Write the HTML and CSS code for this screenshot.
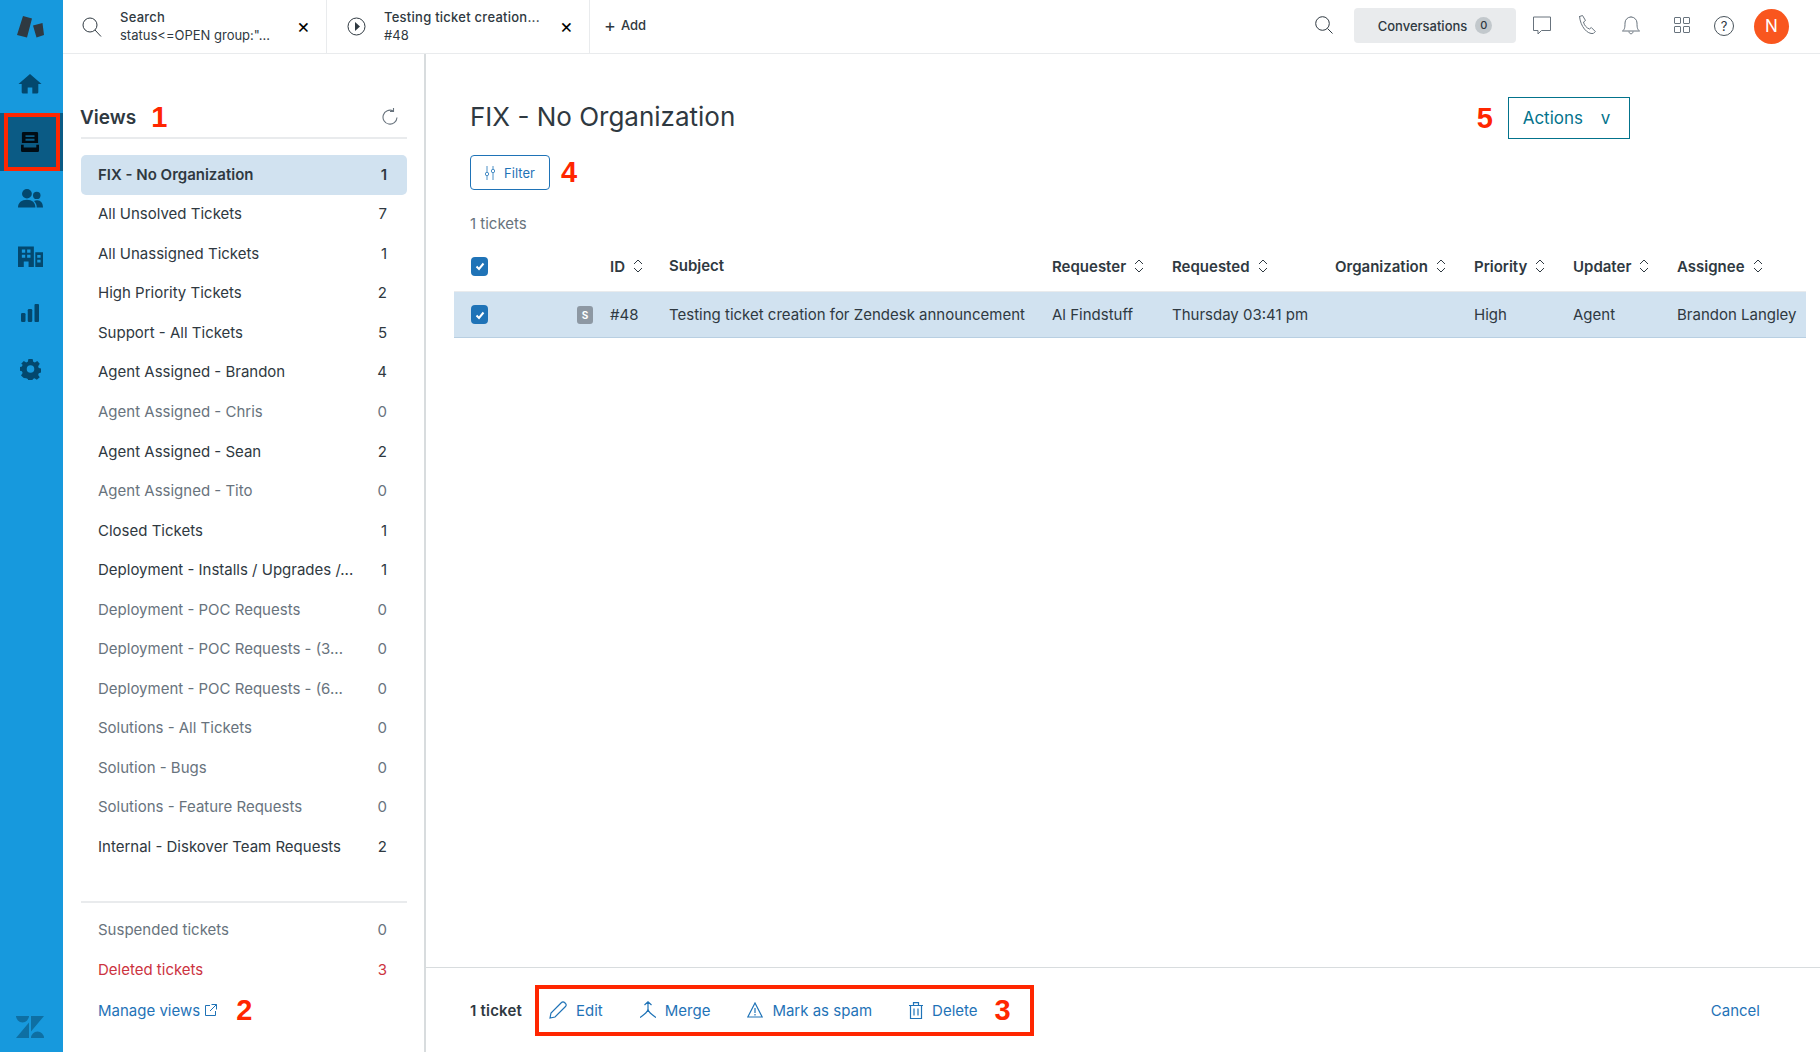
FILE: index.html
```html
<!DOCTYPE html>
<html lang="en">
<head>
    <meta charset="UTF-8">
    <title>FIX - No Organization</title>
    <link rel="stylesheet" href="styles.css">
</head>
<body>
    <div class="app">
        <nav class="rail">
            <svg class="rail-logo" width="28" height="24" viewBox="0 0 28 24"><path d="M7 1l9 2.500-5 19-10-2.500zM17 10.500l9.500-2.500 1.500 12-7.500 2.500z" fill="#2f3941"/></svg>
            <a class="rail-item"><svg width="24" height="21" viewBox="0 0 26 24" preserveAspectRatio="none"><path d="M13 1L0.500 12.500h3.500V22a1.500 1.500 0 0 0 1.500 1.500h5v-7h5v7h5a1.500 1.500 0 0 0 1.500-1.500V12.500h3.500z"/></svg></a>
            <a class="rail-item active"><svg width="18" height="20" viewBox="0 0 20 22" preserveAspectRatio="none"><path d="M1 1.500A1.500 1.500 0 0 1 2.500 0h15A1.500 1.500 0 0 1 19 1.500V12H1zM0 14h3v3h14v-3h3v6.500a1.500 1.500 0 0 1-1.500 1.500h-17A1.500 1.500 0 0 1 0 20.500z" fill="#000c14"/><path d="M5 4.500h10M5 8.500h10" stroke="#0b5b85" stroke-width="2"/></svg></a>
            <a class="rail-item"><svg width="25" height="19" viewBox="0 0 28 22" preserveAspectRatio="none"><circle cx="10" cy="5.500" r="5.500"/><circle cx="21" cy="7.500" r="4.200"/><path d="M0 21.500c0-5.500 4-9 10-9s9.500 3.500 9.500 9zM21 21.500c0-3-1-5.500-3-7.500 1-.7 2-1 3.500-1 4 0 6.500 3.500 6.500 8.500z"/></svg></a>
            <a class="rail-item"><svg width="25" height="22" viewBox="0 0 26 24" preserveAspectRatio="none"><path fill-rule="evenodd" d="M0 1.500h16.500V24H11v-6H6v6H0zM4 5v3.500h3.500V5zM9.500 5v3.500H13V5zM4 10.500V14h3.500v-3.500zM9.500 10.500V14H13v-3.500zM18 8h8v16h-8zM20 11v3h3.500v-3zM20 16v3h3.500v-3z"/></svg></a>
            <a class="rail-item"><svg width="18" height="18" viewBox="0 0 20 20"><rect x="0" y="10" width="5" height="10" rx="1.500"/><rect x="7.500" y="5.500" width="5" height="14.500" rx="1.500"/><rect x="15" y="0" width="5" height="20" rx="1"/></svg></a>
            <a class="rail-item"><svg width="21" height="21" viewBox="0 0 24 24"><path fill-rule="evenodd" d="M9.500 0h5l.7 3.300 2 .9L20 2.300l3 3.500-1.900 2.700.7 2.200 3.200.9v4.400l-3.200.9-.7 2.100 1.900 2.700-3.500 3-2.700-1.800-2 .8-.7 3.200h-4.600l-.7-3.200-2-.8L4 22.600l-3.300-3L2.600 16.800l-.8-2.100-3-.9v-4l3-.9.8-2.200L.9 5.800 4 2.500l2.800 1.700 2-.9zM12 7.500a4.500 4.500 0 1 0 0 9 4.500 4.500 0 0 0 0-9z" transform="translate(0.500 0) scale(.96)"/></svg></a>
            <svg class="rail-brand" width="28" height="22" viewBox="0 0 28 22"><path d="M13 6.500V22H0zM13 0A6.500 6.500 0 0 1 0 0zM15 0H28L15 15.500zM15 22a6.500 6.500 0 0 1 13 0z" fill="#0e6fa3"/></svg>
        </nav>

        <div class="workspace">
            <header class="topbar">
                <div class="tab tab-search">
                    <svg class="tab-icon" width="20" height="20" viewBox="0 0 20 20" fill="none" stroke="#2f3941" stroke-width="1"><circle cx="8" cy="8" r="7"/><path d="M13 13l6 6.500"/></svg>
                    <div class="tab-text">
                        <div class="tab-title">Search</div>
                        <div class="tab-sub">status&lt;=OPEN group:"...</div>
                    </div>
                    <span class="tab-close">×</span>
                </div>
                <div class="tab tab-ticket">
                    <svg class="tab-icon" width="19" height="19" viewBox="0 0 19 19"><circle cx="9.500" cy="9.500" r="8.500" fill="none" stroke="#2f3941" stroke-width="1"/><path d="M8 5l5 4.500-5 4.500z" fill="#2f3941"/></svg>
                    <div class="tab-text">
                        <div class="tab-title">Testing ticket creation...</div>
                        <div class="tab-sub">#48</div>
                    </div>
                    <span class="tab-close">×</span>
                </div>
                <div class="tab-add"><span class="plus">+</span> Add</div>

                <div class="topbar-right">
                    <svg class="search-top" width="18" height="18" viewBox="0 0 18 18" fill="none" stroke="#2f3941" stroke-width="1"><circle cx="7.500" cy="7.500" r="6.800"/><path d="M12.500 12.500l5 5"/></svg>
                    <div class="conv">Conversations <span class="conv-count">0</span></div>
                    <svg class="ti ti-chat" width="18" height="19" viewBox="0 0 18 19" fill="none" stroke="#68737d" stroke-width="1"><path d="M.5 1h17v13.500H8.500L5 18v-3.500H.5z"/></svg>
                    <svg class="ti ti-phone" width="18" height="20" viewBox="0 0 18 20" fill="none" stroke="#68737d" stroke-width="1"><path d="M1.500 1.500l3-1 3 5-2 1.500c.5 3 3 6 6 7l1.800-1.500 4 4-2 2c-6 1-13-7-13.800-17.500z"/></svg>
                    <svg class="ti ti-bell" width="18" height="19" viewBox="0 0 18 19" fill="none" stroke="#68737d" stroke-width="1"><path d="M.5 15c2-1.500 2.500-3 2.500-8a6 6 0 0 1 12 0c0 5 .5 6.500 2.500 8zM7 15.500c0 3 4 3 4 0M9 1V.5"/></svg>
                    <svg class="ti ti-grid" width="16" height="16" viewBox="0 0 16 16" fill="none" stroke="#68737d" stroke-width="1"><rect x=".5" y=".5" width="6" height="6" rx=".5"/><rect x="9.500" y=".5" width="6" height="6" rx=".5"/><rect x=".5" y="9.500" width="6" height="6" rx=".5"/><rect x="9.500" y="9.500" width="6" height="6" rx=".5"/></svg>
                    <div class="help">?</div>
                    <div class="avatar">N</div>
                </div>
            </header>

            <div class="content">
                <aside class="views">
                    <div class="views-head">
                        <span class="views-title">Views</span>
                        <span class="mark mark-1">1</span>
                        <svg class="reload" width="16" height="17" viewBox="0 0 16 17" fill="none" stroke="#68737d" stroke-width="1.100"><path d="M15 9.500a7 7 0 1 1-4-6.700"/><path d="M11.500 0v3.500H8"/></svg>
                    </div>
                    <ul class="view-list">
                        <li class="view selected"><span>FIX - No Organization</span><b>1</b></li>
                        <li class="view"><span>All Unsolved Tickets</span><b>7</b></li>
                        <li class="view"><span>All Unassigned Tickets</span><b>1</b></li>
                        <li class="view"><span>High Priority Tickets</span><b>2</b></li>
                        <li class="view"><span>Support - All Tickets</span><b>5</b></li>
                        <li class="view"><span>Agent Assigned - Brandon</span><b>4</b></li>
                        <li class="view empty"><span>Agent Assigned - Chris</span><b>0</b></li>
                        <li class="view"><span>Agent Assigned - Sean</span><b>2</b></li>
                        <li class="view empty"><span>Agent Assigned - Tito</span><b>0</b></li>
                        <li class="view"><span>Closed Tickets</span><b>1</b></li>
                        <li class="view"><span>Deployment - Installs / Upgrades /...</span><b>1</b></li>
                        <li class="view empty"><span>Deployment - POC Requests</span><b>0</b></li>
                        <li class="view empty"><span>Deployment - POC Requests - (3...</span><b>0</b></li>
                        <li class="view empty"><span>Deployment - POC Requests - (6...</span><b>0</b></li>
                        <li class="view empty"><span>Solutions - All Tickets</span><b>0</b></li>
                        <li class="view empty"><span>Solution - Bugs</span><b>0</b></li>
                        <li class="view empty"><span>Solutions - Feature Requests</span><b>0</b></li>
                        <li class="view"><span>Internal - Diskover Team Requests</span><b>2</b></li>
                    </ul>
                    <div class="views-foot">
                        <div class="view empty"><span>Suspended tickets</span><b>0</b></div>
                        <div class="view deleted"><span>Deleted tickets</span><b>3</b></div>
                        <div class="manage">
                            <a class="manage-link">Manage views</a>
                            <svg width="12" height="12" viewBox="0 0 12 12" fill="none" stroke="#1f73b7" stroke-width="1"><path d="M5 1.500H.5v10h10V7M6.500.5h5v5M11.500.5L5 7"/></svg>
                            <span class="mark mark-2">2</span>
                        </div>
                    </div>
                </aside>

                <main class="main">
                    <div class="title-row">
                        <h1 class="page-title">FIX - No Organization</h1>
                        <span class="mark mark-5">5</span>
                        <button class="actions">Actions <span class="actions-v">v</span></button>
                    </div>
                    <div class="filter-row">
                        <button class="filter">
                            <svg width="10" height="14" viewBox="0 0 10 14" fill="none" stroke="#1f73b7" stroke-width=".8"><path d="M2 0v6M2 10v4M8 0v3M8 7v7"/><circle cx="2" cy="8" r="1.700"/><circle cx="8" cy="5" r="1.700"/></svg>
                            Filter
                        </button>
                        <span class="mark mark-4">4</span>
                    </div>
                    <div class="count">1 tickets</div>

                    <div class="tbl-row tbl-head">
                        <span class="check"><svg width="12" height="12" viewBox="0 0 12 12" fill="none" stroke="#fff" stroke-width="2"><path d="M2.500 6.500l2.500 2.500 4.500-5.500"/></svg></span>
                        <span></span>
                        <span class="th">ID <svg class="sort" width="10" height="14" viewBox="0 0 10 14"><path d="M1 5l4-4 4 4M1 9l4 4 4-4"/></svg></span>
                        <span class="th th-subject">Subject</span>
                        <span class="th">Requester <svg class="sort" width="10" height="14" viewBox="0 0 10 14"><path d="M1 5l4-4 4 4M1 9l4 4 4-4"/></svg></span>
                        <span class="th">Requested <svg class="sort" width="10" height="14" viewBox="0 0 10 14"><path d="M1 5l4-4 4 4M1 9l4 4 4-4"/></svg></span>
                        <span class="th">Organization <svg class="sort" width="10" height="14" viewBox="0 0 10 14"><path d="M1 5l4-4 4 4M1 9l4 4 4-4"/></svg></span>
                        <span class="th">Priority <svg class="sort" width="10" height="14" viewBox="0 0 10 14"><path d="M1 5l4-4 4 4M1 9l4 4 4-4"/></svg></span>
                        <span class="th">Updater <svg class="sort" width="10" height="14" viewBox="0 0 10 14"><path d="M1 5l4-4 4 4M1 9l4 4 4-4"/></svg></span>
                        <span class="th">Assignee <svg class="sort" width="10" height="14" viewBox="0 0 10 14"><path d="M1 5l4-4 4 4M1 9l4 4 4-4"/></svg></span>
                    </div>
                    <div class="tbl-row tbl-body">
                        <span class="check"><svg width="12" height="12" viewBox="0 0 12 12" fill="none" stroke="#fff" stroke-width="2"><path d="M2.500 6.500l2.500 2.500 4.500-5.500"/></svg></span>
                        <span class="status">S</span>
                        <span>#48</span>
                        <span>Testing ticket creation for Zendesk announcement</span>
                        <span>Al Findstuff</span>
                        <span>Thursday 03:41 pm</span>
                        <span></span>
                        <span>High</span>
                        <span>Agent</span>
                        <span>Brandon Langley</span>
                    </div>

                    <footer class="bulk">
                        <span class="bulk-count">1 ticket</span>
                        <div class="bulk-actions">
                            <a class="bulk-item"><svg width="18" height="18" viewBox="0 0 18 18" fill="none" stroke="#1f73b7" stroke-width="1.200"><path d="M1 17l1-5L12.500 1.500a2 2 0 0 1 3 0l1 1a2 2 0 0 1 0 3L6 16z"/></svg>Edit</a>
                            <a class="bulk-item"><svg width="16" height="18" viewBox="0 0 16 18" fill="none" stroke="#1f73b7" stroke-width="1.200"><path d="M4.500 4L8 .8 11.500 4M8 1v7c0 3-3 5-8 8.500M8 8c0 3 3 5 8 8.500"/></svg>Merge</a>
                            <a class="bulk-item"><svg width="16" height="16" viewBox="0 0 16 16" fill="none" stroke="#1f73b7" stroke-width="1.200"><path d="M8 1L.8 15h14.400zM8 6v5M8 12v1.500"/></svg>Mark as spam</a>
                            <a class="bulk-item"><svg width="14" height="17" viewBox="0 0 14 17" fill="none" stroke="#1f73b7" stroke-width="1.200"><path d="M0 3.500h14M4.500 3.500V.6h5v2.900M1.500 3.500v13h11v-13M5 6.500v7M9 6.500v7"/></svg>Delete</a>
                            <span class="mark mark-3">3</span>
                        </div>
                        <a class="cancel">Cancel</a>
                    </footer>
                </main>
            </div>
        </div>
    </div>
</body>
</html>
```
FILE: styles.css
```css
* {
    margin: 0;
    padding: 0;
    box-sizing: border-box;
}

body {
    width: 1820px;
    height: 1052px;
    overflow: hidden;
    background-color: #fff;
    color: #2f3941;
    font-family: Inter, "Noto Sans", sans-serif;
    font-size: 15px;
}

.app {
    display: flex;
    height: 100%;
}

/* left rail */
.rail {
    width: 63px;
    flex: none;
    background-color: #1799dd;
    display: flex;
    flex-direction: column;
    align-items: center;
    padding: 15px 3px 0 0;
}

.rail-logo {
    margin-bottom: 17px;
}

.rail-item {
    width: 100%;
    height: 57px;
    flex: none;
    display: flex;
    align-items: center;
    justify-content: center;
    padding-bottom: 2px;
    fill: #03486e;
}

.rail-item.active {
    background-color: #0b5b85;
    border: 4px solid #ff2600;
    box-shadow: -4px 0 0 #0b5b85, 3px 0 0 #0b5b85;
    width: 56px;
    height: 58px;
    align-self: flex-start;
    margin-left: 4px;
    padding: 0 4px 0 0;
}

.rail-brand {
    margin-top: auto;
    margin-bottom: 14px;
}

.workspace {
    flex: 1;
    display: flex;
    flex-direction: column;
    min-width: 0;
}

/* top bar */
.topbar {
    height: 54px;
    flex: none;
    display: flex;
    align-items: stretch;
    border-bottom: 1px solid #e9ebed;
    font-size: 13px;
}

.tab {
    display: flex;
    align-items: center;
    border-right: 1px solid #e9ebed;
    position: relative;
}

.tab-search {
    width: 264px;
    padding-left: 19px;
}

.tab-ticket {
    width: 263px;
    padding-left: 20px;
}

.tab-text {
    margin-left: 18px;
    line-height: 18px;
    padding-bottom: 2px;
}

.tab-title {
    font-weight: 500;
    letter-spacing: .25px;
}

.tab-close {
    position: absolute;
    right: 16px;
    top: 15px;
    font-size: 20px;
    line-height: 22px;
    color: #000;
}

.tab-add {
    display: flex;
    align-items: center;
    gap: 5px;
    padding: 0 0 3px 14px;
    font-weight: 500;
}

.plus {
    font-size: 18px;
    font-weight: 400;
}

.topbar-right {
    margin-left: auto;
    display: flex;
    align-items: center;
    padding-right: 31px;
}

.conv {
    width: 162px;
    height: 35px;
    margin: 0 0 2px 21px;
    background-color: #e9ebed;
    border-radius: 4px;
    display: flex;
    align-items: center;
    justify-content: center;
    gap: 8px;
    font-size: 13px;
    font-weight: 500;
}

.conv-count {
    width: 17px;
    height: 17px;
    border-radius: 50%;
    background-color: #c2c8cc;
    text-align: center;
    font-size: 11px;
    line-height: 17px;
}

.ti, .search-top {
    margin-bottom: 3px;
}

.ti-chat { margin-left: 17px; }
.ti-phone { margin-left: 27px; }
.ti-bell { margin-left: 26px; }
.ti-grid { margin-left: 34px; }

.help {
    width: 20px;
    height: 20px;
    margin: 0 0 2px 24px;
    border: 1px solid #49545c;
    border-radius: 50%;
    text-align: center;
    font-size: 13px;
    line-height: 18px;
}

.avatar {
    width: 35px;
    height: 35px;
    margin-left: 20px;
    border-radius: 50%;
    background-color: #f9561e;
    color: #fff;
    text-align: center;
    font-size: 17px;
    line-height: 35px;
}

.content {
    flex: 1;
    display: flex;
    min-height: 0;
}

/* views panel */
.views {
    width: 363px;
    flex: none;
    border-right: 2px solid #d8dcde;
    padding: 44px 17px 0 18px;
    display: flex;
    flex-direction: column;
}

.views-head {
    height: 41px;
    display: flex;
    align-items: center;
    border-bottom: 2px solid #e9ebed;
}

.views-title {
    font-size: 19px;
    font-weight: 600;
    margin-left: -1px;
}

.mark {
    color: #ff2600;
    font-family: "Liberation Sans", Arial, sans-serif;
    font-weight: 700;
    font-size: 29px;
    line-height: 1;
}

.mark-1 {
    margin-left: 15px;
}

.reload {
    margin-left: auto;
    margin-right: 9px;
    margin-bottom: 2px;
}

.view-list {
    list-style: none;
    margin-top: 16px;
}

.view {
    height: 39.55px;
    display: flex;
    align-items: center;
    justify-content: space-between;
    padding: 0 20px 2px 17px;
    border-radius: 5px;
    font-weight: 400;
}

.view b {
    font-weight: 400;
}

.view.selected {
    background-color: #d1e2f0;
    font-weight: 600;
    height: 40px;
}

.view.selected b {
    font-weight: 600;
}

.view.empty {
    color: #68737d;
}

.view.deleted {
    color: #cc3340;
}

.views-foot {
    margin-top: auto;
    margin-bottom: 22px;
    border-top: 2px solid #e9ebed;
    padding-top: 8px;
}

.manage {
    height: 40px;
    display: flex;
    align-items: center;
    gap: 5px;
    padding-left: 17px;
    color: #1f73b7;
}

.mark-2 {
    margin-left: 14px;
}

/* main area */
.main {
    flex: 1;
    min-width: 0;
    display: flex;
    flex-direction: column;
    padding-left: 44px;
}

.title-row {
    display: flex;
    align-items: center;
    padding-top: 43px;
    padding-right: 190px;
}

.page-title {
    font-size: 26px;
    font-weight: 400;
    margin-bottom: 3px;
}

.mark-5 {
    margin-left: auto;
    margin-right: 15px;
}

.actions {
    width: 122px;
    height: 42px;
    background: #fff;
    border: 1px solid #03738c;
    color: #03738c;
    font-family: inherit;
    font-size: 17px;
    padding-right: 5px;
}

.actions-v {
    margin-left: 13px;
    font-size: 17px;
}

.filter-row {
    display: flex;
    align-items: center;
    margin-top: 16px;
}

.filter {
    width: 80px;
    height: 35px;
    background: #fff;
    border: 1px solid #1f73b7;
    border-radius: 4px;
    color: #1f73b7;
    font-family: inherit;
    font-size: 13px;
    display: flex;
    align-items: center;
    justify-content: center;
    gap: 9px;
}

.mark-4 {
    margin-left: 11px;
}

.count {
    margin-top: 24px;
    height: 20px;
    line-height: 20px;
    color: #68737d;
}

/* ticket table */
.tbl-row {
    display: grid;
    grid-template-columns: 106px 33px 59px 383px 120px 163px 139px 99px 104px 1fr;
    align-items: center;
    margin: 0 14px 0 -16px;
    padding-left: 17px;
}

.tbl-head {
    height: 45px;
    margin-top: 13px;
    padding-bottom: 6px;
    font-weight: 600;
    border-bottom: 1px solid #e9ebed;
}

.tbl-body {
    height: 46px;
    background-color: #d1e2f0;
    border-bottom: 1px solid #b8cfe2;
}

.check {
    width: 17px;
    height: 19px;
    border-radius: 4px;
    background-color: #1f73b7;
    display: flex;
    align-items: center;
    justify-content: center;
}

.th {
    display: flex;
    align-items: center;
    gap: 6px;
}

.th-subject {
    margin-top: -2px;
}

.sort {
    fill: none;
    stroke: #2f3941;
    stroke-width: 1;
    margin-left: 2px;
}

.status {
    width: 16px;
    height: 18px;
    border-radius: 3px;
    background-color: #8d98a3;
    color: #fff;
    font-size: 10px;
    font-weight: 700;
    line-height: 18px;
    text-align: center;
}

/* bulk bar */
.bulk {
    margin-top: auto;
    margin-left: -44px;
    height: 85px;
    border-top: 1px solid #d8dcde;
    display: flex;
    align-items: center;
    padding: 0 60px 0 44px;
}

.bulk-count {
    font-weight: 600;
    letter-spacing: .2px;
    width: 65px;
    flex: none;
}

.bulk-actions {
    width: 499px;
    height: 51px;
    border: 4px solid #ff2600;
    display: flex;
    align-items: center;
    gap: 37px;
    padding-left: 10px;
    color: #1f73b7;
}

.bulk-item {
    display: flex;
    align-items: center;
    gap: 9px;
}

.mark-3 {
    margin-left: -20px;
}

.cancel {
    margin-left: auto;
    color: #1f73b7;
}
```
